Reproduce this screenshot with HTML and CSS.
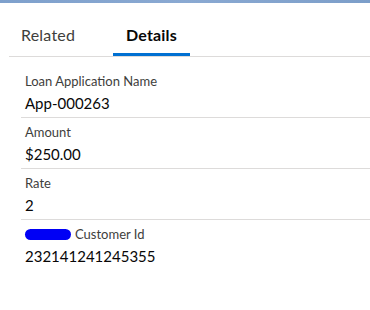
FILE: index.html
```html
<!DOCTYPE html>
<html lang="en">
<head>
    <meta charset="UTF-8">
    <title>Loan Application</title>
    <link rel="stylesheet" href="styles.css">
</head>
<body>

<div class="top-band"></div>

<div class="card">
    <div class="tabs">
        <div class="tab">Related</div>
        <div class="tab active">Details</div>
    </div>

    <div class="fields">
        <div class="field">
            <div class="label">Loan Application Name</div>
            <div class="value">App-000263</div>
        </div>
        <div class="field">
            <div class="label">Amount</div>
            <div class="value">$250.00</div>
        </div>
        <div class="field">
            <div class="label">Rate</div>
            <div class="value">2</div>
        </div>
        <div class="field last">
            <div class="label"><span class="redact"></span> Customer Id</div>
            <div class="value">232141241245355</div>
        </div>
    </div>
</div>

</body>
</html>
```

FILE: styles.css
```css
body {
    margin: 0;
    padding: 0;
    font-family: 'Lato', 'Open Sans', sans-serif;
    background-color: #ffffff;
    color: #080707;
}

.top-band {
    height: 3px;
    background: linear-gradient(90deg, #7ea0cc, #8aa9d2, #7c9ec9);
}

.card {
    padding-left: 9px;
}

.tabs {
    display: flex;
    border-bottom: 1px solid #dddbda;
    height: 54px;
    box-sizing: border-box;
    padding-top: 22px;
}

.tab {
    font-size: 16px;
    color: #3e3e3c;
    padding: 0 12px;
    height: 31px;
    box-sizing: border-box;
    letter-spacing: 0.2px;
}

.tab:first-child {
    width: 104px;
}

.tab.active {
    font-weight: bold;
    color: #080707;
    width: 77px;
    text-align: center;
    border-bottom: 3px solid #0070d2;
}

.fields {
    padding-left: 12px;
    padding-top: 10px;
}

.field {
    border-bottom: 1px solid #dddbda;
    height: 51px;
    box-sizing: border-box;
    padding-left: 4px;
    padding-top: 5px;
}

.field.last {
    border-bottom: none;
}

.label {
    font-size: 13px;
    color: #3e3e3c;
    line-height: 18px;
    display: flex;
    align-items: center;
    gap: 4px;
}

.value {
    font-size: 15px;
    line-height: 20px;
    margin-top: 3px;
}

.redact {
    display: inline-block;
    width: 46px;
    height: 11px;
    border-radius: 6px;
    background-color: #0000f5;
}
```
